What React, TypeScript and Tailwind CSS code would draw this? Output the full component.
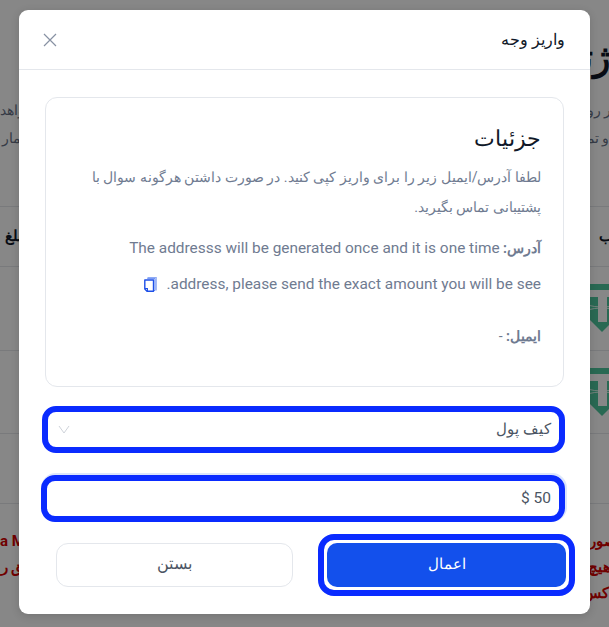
import React from "react";

const sans = "font-['Roboto','Noto_Sans','Liberation_Sans',sans-serif]";

function Shield() {
  return (
    <svg width="30" height="48" viewBox="0 0 30 48" className="block">
      <path d="M0 0H30V6H0Z" fill="#4fc79d" />
      <path d="M0 13H30V33L15 48L0 33Z" fill="#4fc79d" />
      <path d="M11 13H20V38H11Z" fill="#fff" />
      <path d="M0 21Q15 25 30 21M0 26Q15 22 30 26" stroke="#fff" strokeWidth="0.8" fill="none" />
    </svg>
  );
}

function CopyIcon() {
  return (
    <svg width="13" height="15" viewBox="0 0 13 15" fill="none" className="block">
      <path d="M3.5 0.7H12.2V13.5" stroke="#8fabf5" strokeWidth="1.2" />
      <path d="M3.5 2V1.6H11V13.5H10" stroke="#4f7bf0" strokeWidth="0.8" />
      <path d="M0.8 3H9.5V14.2H3L0.8 12Z" stroke="#1d4fe8" strokeWidth="1.4" strokeLinejoin="round" />
      <path d="M0.8 11.5H3.4V14.2" stroke="#1d4fe8" strokeWidth="1.1" />
    </svg>
  );
}

export default function App() {
  return (
    <div dir="rtl" className={`relative h-[627px] w-full overflow-hidden bg-white ${sans}`}>
      {/* page behind the dialog */}
      <div className="flex h-full flex-col">
        <div className="flex h-[207px] flex-col border-b border-[#e5e7eb] pt-[36px]">
          <div className="mr-[-1px] text-[36px] leading-[44px] font-semibold text-[#101828]">ژتون</div>
          <div className="mt-[16px] flex justify-between text-[14px] leading-[28px] text-[#667085]">
            <span className="mr-[-8px]">در روز</span>
            <span>خواهد</span>
          </div>
          <div className="flex justify-between text-[14px] leading-[28px] text-[#667085]">
            <span>و تمام</span>
            <span className="ml-[2px]">شمار</span>
          </div>
        </div>
        <div className="flex h-[60px] items-center justify-between border-b border-[#e5e7eb] text-[15px] font-semibold text-[#101828]">
          <span className="mr-[-4px]">ب</span>
          <span className="ml-[5px]">مبلغ</span>
        </div>
        <div className="h-[84px] border-b border-[#e5e7eb] pt-[17px]">
          <div className="mr-[-8px] w-[30px]"><Shield /></div>
        </div>
        <div className="h-[83px] border-b border-[#e5e7eb] pt-[17px]">
          <div className="mr-[-8px] w-[30px]"><Shield /></div>
        </div>
        <div className="h-[70px] border-b border-[#e5e7eb]" />
        <div className="flex justify-between pt-[24px] text-[15px] leading-[26px] font-bold text-[#d40000]">
          <div>
            <div className="mr-[-8px]">صورت</div>
            <div className="mr-[-2px]">هیچ</div>
            <div>کس</div>
          </div>
          <div>
            <div dir="ltr">a Mo</div>
            <div className="ml-[-8px]">حق ر</div>
          </div>
        </div>
      </div>

      {/* overlay */}
      <div className="absolute inset-0 bg-black/[0.47]" />

      {/* dialog */}
      <div className="absolute top-[10px] left-[19px] flex h-[604px] w-[571px] flex-col rounded-[9px] bg-white shadow-[0_2px_8px_rgba(0,0,0,0.15)]">
        <div className="flex h-[60px] items-center justify-between border-b border-[#e4e7ec] px-[25px]">
          <span className="pt-[1px] text-[16px] leading-6 text-[#101828]">واریز وجه</span>
          <svg width="14" height="14" viewBox="0 0 14 14" fill="none" stroke="#8791a3" strokeWidth="1.2" className="-ml-[1px]">
            <path d="M1 1L13 13M13 1L1 13" />
          </svg>
        </div>

        <div className="flex flex-1 flex-col px-[26px] pt-[27px]">
          <div className="flex h-[290px] flex-col rounded-[12px] border border-[#e4e7ec] px-[22px] pt-[26px]">
            <div className="text-[21.5px] leading-[30px] text-[#101828]">جزئیات</div>
            <p className="mt-[8px] text-[14.2px] leading-[30px] text-[#6f7b91]">
              لطفا آدرس/ایمیل زیر را برای واریز کپی کنید. در صورت داشتن هرگونه سوال با پشتیبانی تماس بگیرید.
            </p>
            <div className="mt-[8px] text-[15.4px] leading-[36px] text-[#6f7b91]">
              <div className="whitespace-nowrap">
                <span className="text-[14px] font-bold">آدرس: </span>
                The addresss will be generated once and it is one time
              </div>
              <div className="flex items-center gap-[10px]">
                <span className="whitespace-nowrap">address, please send the exact amount you will be see.</span>
                <CopyIcon />
              </div>
            </div>
            <div className="mt-[16px] text-[14px] leading-[36px] text-[#6f7b91]">
              <span className="font-bold">ایمیل: </span>-
            </div>
          </div>

          <div className="mt-[19px] mr-[-1px] ml-[-3px] flex h-[47px] items-center justify-between rounded-[14px] border-[6px] border-[#0a2bff] pr-[8px] pl-[10px] text-[14.5px] text-[#4b5563]">
            <span>کیف پول</span>
            <svg width="12" height="9" viewBox="0 0 12 9" fill="none" stroke="#cfd3da" strokeWidth="1">
              <path d="M1 1L6 8L11 1" />
            </svg>
          </div>

          <div className="mt-[22px] mr-[-1px] ml-[-4px] flex h-[47px] items-center rounded-[14px] border-[6px] border-[#0a2bff] pr-[8px] text-[15.5px] text-[#4b5563] shadow-[1px_-1px_0_1px_#dbe5fb]">
            <span dir="ltr">$ 50</span>
          </div>

          <div className="mt-[12px] mr-[-11px] flex items-center gap-[25px]">
            <button className="h-[62px] w-[257px] rounded-[16px] border-[6px] border-[#0a2bff] bg-white p-[3px]">
              <span className="flex h-full w-full items-center justify-center rounded-[10px] bg-[#1350ec] text-[14.5px] font-medium text-white">
                اعمال
              </span>
            </button>
            <button className="h-[44px] w-[237px] rounded-[12px] border border-[#e4e7ec] bg-white text-[15.5px] text-[#4b5563]">
              بستن
            </button>
          </div>
        </div>
      </div>
    </div>
  );
}
